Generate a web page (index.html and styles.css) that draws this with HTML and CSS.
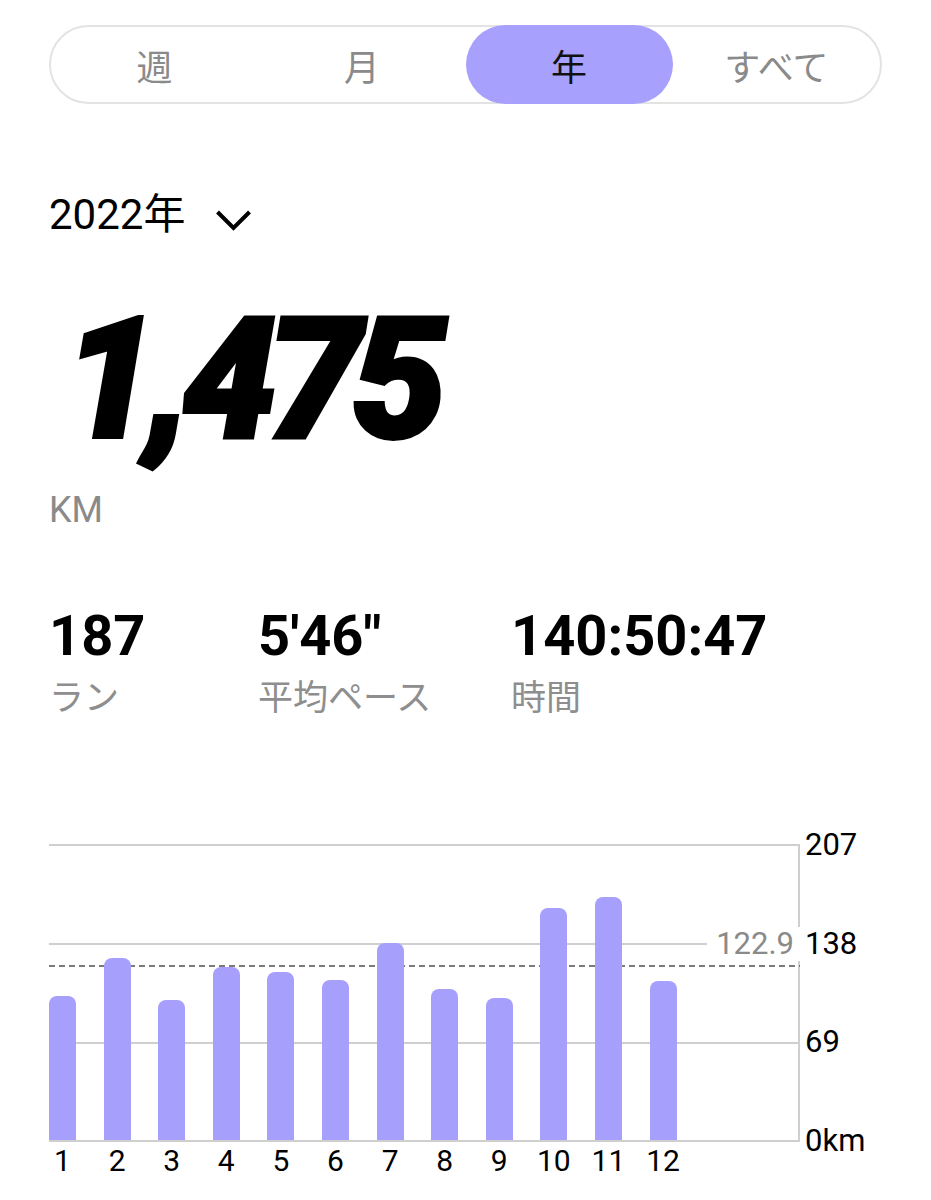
FILE: index.html
```html
<!DOCTYPE html>
<html lang="ja">
<head>
  <meta charset="UTF-8" />
  <title>アクティビティ 年</title>
  <meta name="viewport" content="width=device-width, initial-scale=1.0" />
  <link rel="stylesheet" href="styles.css">
</head>
<body>
  <nav class="tabs">
    <div class="tab">週</div>
    <div class="tab">月</div>
    <div class="tab active">年</div>
    <div class="tab">すべて</div>
  </nav>

  <div class="year">
    <span>2022年</span>
    <svg class="chevron" width="37" height="22" viewBox="0 0 37 22">
      <polyline points="2.5,3 18.5,19 34.5,3" fill="none" stroke="#000" stroke-width="4" />
    </svg>
  </div>

  <div class="total">1,475</div>
  <div class="unit">KM</div>

  <div class="stats">
    <div class="stat">
      <div class="stat-value">187</div>
      <div class="stat-label">ラン</div>
    </div>
    <div class="stat">
      <div class="stat-value">5'46"</div>
      <div class="stat-label">平均ペース</div>
    </div>
    <div class="stat">
      <div class="stat-value">140:50:47</div>
      <div class="stat-label">時間</div>
    </div>
  </div>

  <section class="chart">
    <div class="chart-main">
      <div class="plot">
        <div class="grid-line" style="top:-1px"></div>
        <div class="grid-line" style="top:98px"></div>
        <div class="grid-line" style="top:197px"></div>
        <div class="avg-line" style="top:120px"></div>
        <div class="avg-label">122.9</div>
        <div class="bars">
          <div class="bar-cell"><div class="bar" style="height:145px"></div></div>
          <div class="bar-cell"><div class="bar" style="height:183px"></div></div>
          <div class="bar-cell"><div class="bar" style="height:141px"></div></div>
          <div class="bar-cell"><div class="bar" style="height:174px"></div></div>
          <div class="bar-cell"><div class="bar" style="height:169px"></div></div>
          <div class="bar-cell"><div class="bar" style="height:161px"></div></div>
          <div class="bar-cell"><div class="bar" style="height:198px"></div></div>
          <div class="bar-cell"><div class="bar" style="height:152px"></div></div>
          <div class="bar-cell"><div class="bar" style="height:143px"></div></div>
          <div class="bar-cell"><div class="bar" style="height:233px"></div></div>
          <div class="bar-cell"><div class="bar" style="height:244px"></div></div>
          <div class="bar-cell"><div class="bar" style="height:160px"></div></div>
        </div>
        <div class="grid-line base" style="top:295px"></div>
      </div>
      <div class="months">
        <span>1</span><span>2</span><span>3</span><span>4</span>
        <span>5</span><span>6</span><span>7</span><span>8</span>
        <span>9</span><span>10</span><span>11</span><span>12</span>
      </div>
    </div>
    <div class="axis">
      <span>207</span>
      <span>138</span>
      <span>69</span>
      <span>0km</span>
    </div>
  </section>
</body>
</html>
```

FILE: styles.css
```css
body {
  margin: 0;
  padding: 25px 49px 0 49px;
  background: #fff;
  color: #000;
  font-family: Roboto, "Noto Sans CJK JP", sans-serif;
}

.tabs {
  display: grid;
  grid-template-columns: repeat(4, 1fr);
  height: 79px;
  box-sizing: border-box;
  border: 2px solid #e3e3e3;
  border-radius: 40px;
}

.tab {
  display: flex;
  justify-content: center;
  align-items: center;
  margin: -2px 0;
  font-size: 36px;
  color: #8a8a8a;
  border-radius: 40px;
}

.tab.active {
  background: #a7a0fc;
  color: #111;
}

.year {
  display: flex;
  align-items: center;
  margin-top: 86px;
  font-size: 42px;
  line-height: 50px;
}

.chevron {
  margin-left: 30px;
  margin-top: 10px;
}

.total {
  margin-top: 55px;
  margin-left: 14px;
  font-size: 169px;
  line-height: 169px;
  font-weight: 900;
  font-style: italic;
  letter-spacing: -10px;
  -webkit-text-stroke: 4px #000;
}

.unit {
  margin-top: 26px;
  font-size: 36px;
  line-height: 40px;
  color: #8a8a8a;
}

.stats {
  display: grid;
  grid-template-columns: 209px 253px auto;
  margin-top: 74px;
}

.stat-value {
  font-size: 56px;
  line-height: 64px;
  font-weight: 700;
}

.stat-label {
  margin-top: 9px;
  font-size: 35px;
  line-height: 44px;
  color: #8e8e8e;
}

.chart {
  display: flex;
  margin-top: 124px;
}

.plot {
  position: relative;
  width: 751px;
  height: 296px;
  box-sizing: border-box;
  border-right: 2px solid #cfcfcf;
}

.grid-line {
  position: absolute;
  left: 0;
  right: -2px;
  height: 2px;
  background: #cfcfcf;
}

.grid-line.base { z-index: 2; }

.avg-line {
  position: absolute;
  left: 0;
  right: -2px;
  height: 2px;
  background: repeating-linear-gradient(90deg, #7a7a7a 0 6px, transparent 6px 10px);
}

.avg-label {
  position: absolute;
  top: 82px;
  right: -4px;
  padding: 0 8px 0 9px;
  background: #fff;
  color: #8a8a8a;
  font-size: 31px;
  line-height: 34px;
  z-index: 1;
}

.bars {
  position: relative;
  display: flex;
  align-items: flex-end;
  height: 100%;
  margin-left: -13.8px;
}

.bar-cell {
  display: flex;
  justify-content: center;
  width: 54.6px;
  flex: none;
}

.bar {
  width: 27px;
  background: #a69ffb;
  border-radius: 8px 8px 0 0;
}

.months {
  display: flex;
  margin-left: -13.8px;
  margin-top: 3px;
  font-size: 30px;
  line-height: 34px;
}

.months span {
  width: 54.6px;
  flex: none;
  text-align: center;
}

.axis {
  display: flex;
  flex-direction: column;
  justify-content: space-between;
  height: 330px;
  margin-top: -17px;
  margin-left: 5px;
  font-size: 31px;
  line-height: 34px;
}
```
